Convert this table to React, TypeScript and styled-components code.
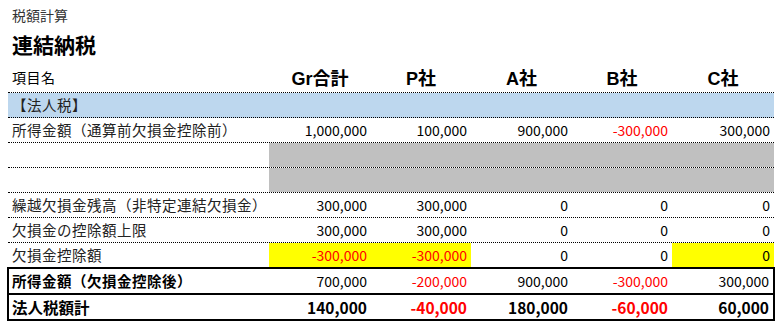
import styled, { createGlobalStyle } from "styled-components";

const GlobalStyle = createGlobalStyle`
  body {
    margin: 0;
    background: #ffffff;
    font-family: "Noto Sans CJK JP", "Noto Sans", sans-serif;
    color: #000000;
  }
`;

type Cell = { v: string; red?: boolean; bg?: string };

type RowData = {
  label: string;
  cells: Cell[];
  bg?: string;
  fill?: string;
};

const GRAY = "#c0c0c0";
const YELLOW = "#ffff00";
const BLUE = "#bdd7ee";

const companies = ["Gr合計", "P社", "A社", "B社", "C社"];

const rows: RowData[] = [
  { label: "【法人税】", cells: [], bg: BLUE },
  {
    label: "所得金額（通算前欠損金控除前）",
    cells: [
      { v: "1,000,000" },
      { v: "100,000" },
      { v: "900,000" },
      { v: "-300,000", red: true },
      { v: "300,000" },
    ],
  },
  { label: "", cells: [], fill: GRAY },
  { label: "", cells: [], fill: GRAY },
  {
    label: "繰越欠損金残高（非特定連結欠損金）",
    cells: [{ v: "300,000" }, { v: "300,000" }, { v: "0" }, { v: "0" }, { v: "0" }],
  },
  {
    label: "欠損金の控除額上限",
    cells: [{ v: "300,000" }, { v: "300,000" }, { v: "0" }, { v: "0" }, { v: "0" }],
  },
  {
    label: "欠損金控除額",
    cells: [
      { v: "-300,000", red: true, bg: YELLOW },
      { v: "-300,000", red: true, bg: YELLOW },
      { v: "0" },
      { v: "0" },
      { v: "0", bg: YELLOW },
    ],
  },
];

const totals: { label: string; bold: boolean; cells: Cell[] }[] = [
  {
    label: "所得金額（欠損金控除後）",
    bold: false,
    cells: [
      { v: "700,000" },
      { v: "-200,000", red: true },
      { v: "900,000" },
      { v: "-300,000", red: true },
      { v: "300,000" },
    ],
  },
  {
    label: "法人税額計",
    bold: true,
    cells: [
      { v: "140,000" },
      { v: "-40,000", red: true },
      { v: "180,000" },
      { v: "-60,000", red: true },
      { v: "60,000" },
    ],
  },
];

const App = () => {
  return (
    <Page>
      <GlobalStyle />
      <Caption>税額計算</Caption>
      <Heading>連結納税</Heading>
      <HeaderRow>
        <HeaderLabel>項目名</HeaderLabel>
        {companies.map((c) => (
          <HeaderCell key={c}>{c}</HeaderCell>
        ))}
      </HeaderRow>
      <Sheet>
        {rows.map((r, i) => (
          <Row key={i} $bg={r.bg}>
            <Label>{r.label}</Label>
            {r.fill ? (
              <Filler $bg={r.fill} />
            ) : (
              companies.map((c, j) => {
                const cell = r.cells[j];
                return (
                  <Num key={c} $red={cell?.red} $bg={cell?.bg}>
                    {cell?.v}
                  </Num>
                );
              })
            )}
          </Row>
        ))}
        <TotalBox>
          {totals.map((t, i) => (
            <TotalRow key={i} $last={i === totals.length - 1}>
              <TotalLabel $big={t.bold}>{t.label}</TotalLabel>
              {t.cells.map((cell, j) => (
                <Num key={j} $red={cell.red} $bold={t.bold}>
                  {cell.v}
                </Num>
              ))}
            </TotalRow>
          ))}
        </TotalBox>
      </Sheet>
    </Page>
  );
};

export default App;

const Page = styled.div`
  width: 766px;
  padding: 5px 0 0 8px;
`;

const Caption = styled.div`
  padding-left: 4px;
  font-size: 14px;
  line-height: 20px;
  color: #333333;
`;

const Heading = styled.div`
  padding-left: 4px;
  font-size: 21px;
  font-weight: 700;
  line-height: 34px;
  margin-top: 2px;
`;

const HeaderRow = styled.div`
  display: grid;
  grid-template-columns: 261px 102px 100px 101px 100px 1fr;
  align-items: center;
  height: 31px;
`;

const HeaderLabel = styled.div`
  padding-left: 4px;
  font-size: 14px;
  letter-spacing: 0.5px;
`;

const HeaderCell = styled.div`
  text-align: center;
  font-family: "Liberation Sans", "Noto Sans CJK JP", sans-serif;
  font-size: 18px;
  font-weight: 700;
`;

const Sheet = styled.div`
  border-top: 1px dotted #000000;
`;

const Row = styled.div<{ $bg?: string }>`
  display: grid;
  grid-template-columns: 261px 102px 100px 101px 100px 1fr;
  height: 24px;
  border-bottom: 1px dotted #000000;
  background: ${({ $bg }) => $bg || "transparent"};
  font-size: 14.5px;
  line-height: 24px;
`;

const Label = styled.div`
  padding-left: 4px;
  white-space: nowrap;
  letter-spacing: 0.5px;
  color: #222222;
`;

const Filler = styled.div<{ $bg: string }>`
  grid-column: 2 / -1;
  background: ${({ $bg }) => $bg};
`;

const Num = styled.div<{ $red?: boolean; $bg?: string; $bold?: boolean }>`
  text-align: right;
  padding-right: 4px;
  font-family: "Noto Sans CJK JP", "Liberation Sans", sans-serif;
  font-size: ${({ $bold }) => ($bold ? "15.5px" : "14px")};
  font-weight: ${({ $bold }) => ($bold ? 700 : 400)};
  color: ${({ $red }) => ($red ? "#ff0000" : "#000000")};
  background: ${({ $bg }) => $bg || "transparent"};
`;

const TotalBox = styled.div`
  margin: -1px -1px 0;
  border: 2px solid #000000;
`;

const TotalRow = styled.div<{ $last: boolean }>`
  display: grid;
  grid-template-columns: 260px 102px 100px 101px 100px 1fr;
  height: 24px;
  line-height: 24px;
  font-size: 14.5px;
  border-bottom: ${({ $last }) => ($last ? "none" : "2px solid #000000")};
`;

const TotalLabel = styled.div<{ $big: boolean }>`
  padding-left: 3px;
  font-size: ${({ $big }) => ($big ? "15.5px" : "14.5px")};
  font-weight: 700;
  letter-spacing: ${({ $big }) => ($big ? "0" : "0.5px")};
  white-space: nowrap;
`;
